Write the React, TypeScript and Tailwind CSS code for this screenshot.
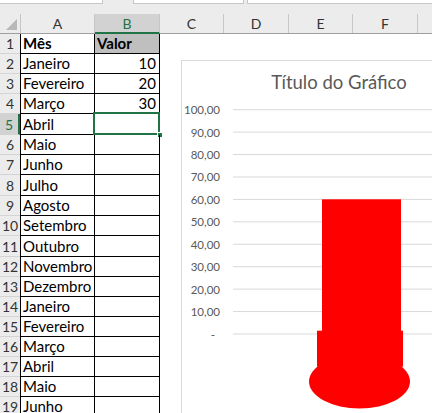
import React from "react";

const FONT = { fontFamily: "Lato, 'Open Sans', sans-serif" };

const cols = [
  { label: "A", w: "w-[74px]" },
  { label: "B", w: "w-[65px]", selected: true },
  { label: "C", w: "w-[64px]" },
  { label: "D", w: "w-[65px]" },
  { label: "E", w: "w-[64px]" },
  { label: "F", w: "w-[65px]" },
];

const rows: { month: string; value?: string; h: string }[] = [
  { month: "Mês", value: "Valor", h: "h-[20px]" },
  { month: "Janeiro", value: "10", h: "h-[20px]" },
  { month: "Fevereiro", value: "20", h: "h-[20px]" },
  { month: "Março", value: "30", h: "h-[20px]" },
  { month: "Abril", h: "h-[21px]" },
  { month: "Maio", h: "h-[20px]" },
  { month: "Junho", h: "h-[20px]" },
  { month: "Julho", h: "h-[21px]" },
  { month: "Agosto", h: "h-[20px]" },
  { month: "Setembro", h: "h-[20px]" },
  { month: "Outubro", h: "h-[21px]" },
  { month: "Novembro", h: "h-[20px]" },
  { month: "Dezembro", h: "h-[20px]" },
  { month: "Janeiro", h: "h-[20px]" },
  { month: "Fevereiro", h: "h-[20px]" },
  { month: "Março", h: "h-[20px]" },
  { month: "Abril", h: "h-[20px]" },
  { month: "Maio", h: "h-[20px]" },
  { month: "Junho", h: "h-[20px]" },
];

const ticks = ["100,00", "90,00", "80,00", "70,00", "60,00", "50,00", "40,00", "30,00", "20,00", "10,00", "-"];

function Chart() {
  return (
    <div className="absolute left-[181px] top-[60px] z-10 w-[316px] h-[380px] bg-white border border-[#d9d9d9]">
      <div className="h-[44px] flex items-center justify-center text-[18.5px] text-[#595959]">
        Título do Gráfico
      </div>
      <svg width="314" height="330" className="block">
        {ticks.map((t, i) => {
          const y = 4.7 + i * 22.43;
          return (
            <g key={t}>
              <line x1="51" x2="307" y1={y} y2={y} stroke="#d9d9d9" strokeWidth="1" />
              <text
                x={t === "-" ? 33 : 38}
                y={y}
                textAnchor="end"
                dominantBaseline="central"
                fontSize="11.5"
                fill="#595959"
              >
                {t}
              </text>
            </g>
          );
        })}
        <ellipse cx="177.5" cy="276.5" rx="50.5" ry="27" fill="#ff0000" />
        <rect x="135" y="225.7" width="86" height="36" fill="#ff0000" />
        <rect x="140" y="94.3" width="79" height="132" fill="#ff0000" />
      </svg>
    </div>
  );
}

export default function App() {
  return (
    <div className="relative w-[432px] h-[413px] overflow-hidden bg-white text-[#000]" style={FONT}>
      <div className="h-[14px] flex items-start bg-[#ececec]">
        <div className="w-[103px] h-[4px] bg-white border-r border-b border-[#c6c6c6]" />
        <div className="ml-[30px] w-[111px] h-[4px] bg-white border-x border-b border-[#c6c6c6]" />
        <div className="ml-[3px] flex-1 h-[4px] bg-white border-l border-b border-[#c6c6c6]" />
      </div>

      <div className="flex h-[20px] bg-[#ececec] border-b border-[#9e9e9e] text-[14px] text-[#333]">
        <div className="relative w-[21px] border-r border-[#c6c6c6]">
          <div className="absolute right-[3px] bottom-[3px] w-0 h-0 border-l-[11px] border-l-transparent border-b-[11px] border-b-[#b8b8b8]" />
        </div>
        {cols.map((c) => (
          <div
            key={c.label}
            className={`${c.w} flex items-center justify-center border-r border-[#c6c6c6] ${
              c.selected ? "bg-[#d2d2d2] text-[#217346] border-b-2 border-b-[#217346] -mb-px" : ""
            }`}
          >
            {c.label}
          </div>
        ))}
        <div className="flex-1" />
      </div>

      {rows.map((r, i) => {
        const n = i + 1;
        const sel = n === 5;
        const bold = n === 1;
        return (
          <div key={n} className={`flex ${r.h} text-[15px]`}>
            <div
              className={`w-[20px] flex items-center justify-center border-b border-[#d4d4d4] text-[14px] ${
                sel ? "bg-[#d2d2d2] text-[#217346] border-r-2 border-r-[#217346]" : "bg-[#ececec] text-[#333]"
              }`}
            >
              {n}
            </div>
            <div className={`w-[75px] flex items-end pl-[2px] pb-[1px] leading-[18px] border-l border-r border-b border-black ${bold ? "font-bold" : ""}`}>
              {r.month}
            </div>
            <div
              className={`relative w-[65px] flex items-end pb-[1px] leading-[18px] border-r border-b border-black ${
                bold ? "font-bold bg-[#bfbfbf] pl-[2px]" : "justify-end pr-[3px]"
              }`}
            >
              {r.value}
              {sel && (
                <>
                  <div className="absolute left-[-2px] top-[-2px] right-[-1px] bottom-[-1px] border-2 border-[#217346]" />
                  <div className="absolute right-[-4px] bottom-[-4px] w-[6px] h-[6px] bg-[#217346] border border-white" />
                </>
              )}
            </div>
            <div className="flex-1" />
          </div>
        );
      })}

      <Chart />
    </div>
  );
}
